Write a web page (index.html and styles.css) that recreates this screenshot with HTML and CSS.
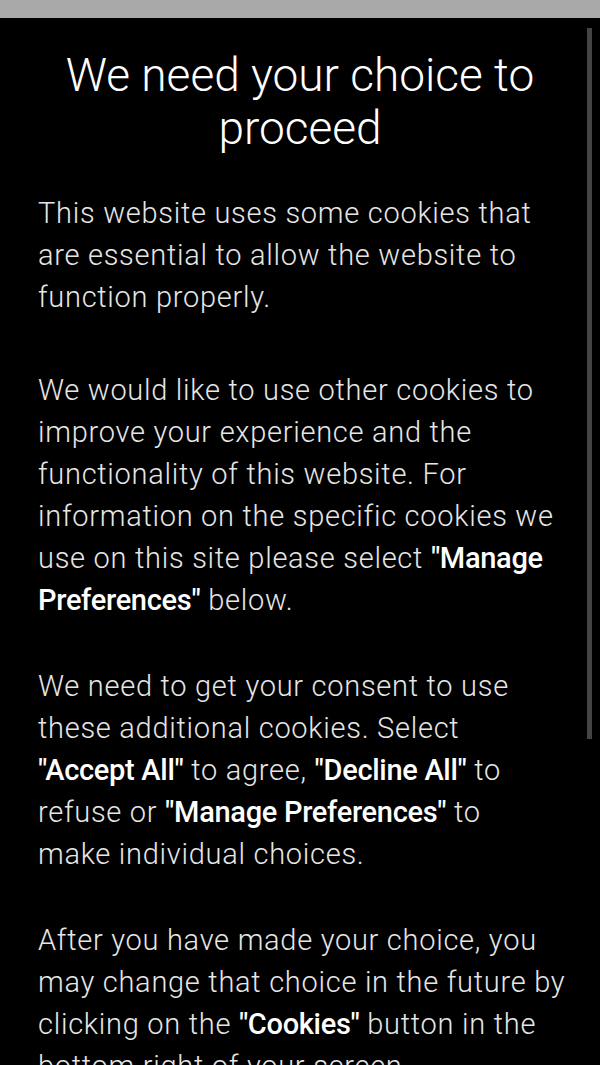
FILE: index.html
```html
<!DOCTYPE html>
<html lang="en">
<head>
<meta charset="utf-8">
<link rel="stylesheet" href="styles.css">
</head>
<body>
<div class="topbar"></div>
<main class="dialog">
  <h1 class="title">We need your choice to proceed</h1>
  <p class="para first">This website uses some cookies that are essential to allow the website to function properly.</p>
  <p class="para second">We would like to use other cookies to improve your experience and the functionality of this website. For information on the specific cookies we use on this site please select <b>"Manage Preferences"</b> below.</p>
  <p class="para">We need to get your consent to use these additional cookies. Select <b class="nowrap">"Accept All"</b> to agree, <b class="nowrap">"Decline All"</b> to refuse or <b class="nowrap">"Manage Preferences"</b> to make&nbsp;individual choices.</p>
  <p class="para">After you have made your choice, you may change that choice in the future by clicking on the <b>"Cookies"</b> button in the bottom right of your screen.</p>
</main>
<div class="scroll-thumb"></div>
</body>
</html>
```
FILE: styles.css
```css
html, body {
  margin: 0;
  padding: 0;
  background: #000;
  height: 1065px;
  overflow: hidden;
}
body {
  font-family: Roboto, "Liberation Sans", sans-serif;
  color: #e6e6e6;
}
.topbar {
  height: 18px;
  background: #a8a8a8;
}
.dialog {
  padding: 31px 32px 0 38px;
  width: 530px;
}
.title {
  margin: 0 0 0 -6px;
  font-weight: 300;
  font-size: 46px;
  line-height: 53px;
  text-align: center;
  color: #fff;
}
.para {
  margin: 44px 0 0 0;
  font-weight: 300;
  font-size: 29px;
  line-height: 42px;
  letter-spacing: 0.72px;
}
.para.first {
  margin-top: 37px;
}
.para.second {
  margin-top: 51px;
}
.para b {
  font-weight: 500;
  color: #fff;
  letter-spacing: -0.3px;
}
.para b.nowrap {
  white-space: nowrap;
}
.scroll-thumb {
  position: absolute;
  left: 587px;
  top: 28px;
  width: 5px;
  height: 711px;
  background: #444;
}
```
